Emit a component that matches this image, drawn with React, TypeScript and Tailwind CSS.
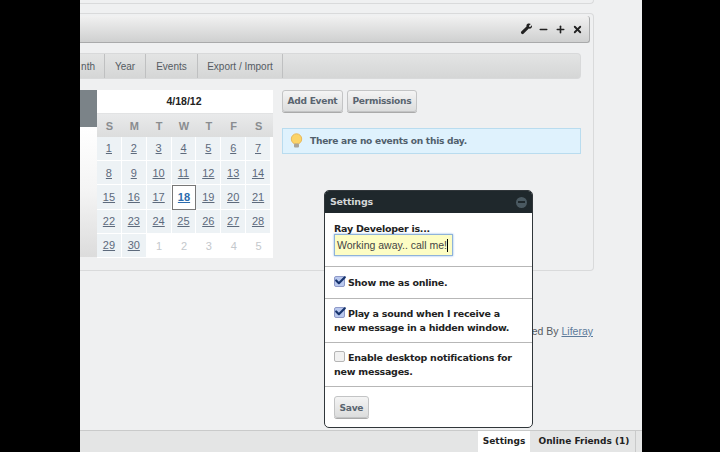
import { Check, Minus, Plus, X } from "lucide-react";

const sans = "font-['Liberation_Sans',Arial,sans-serif]";
const wide = "font-['DejaVu_Sans',Verdana,sans-serif]";

const tabs = [
  { label: "nth", width: "w-[25px]", align: "justify-end pr-[9px]" },
  { label: "Year", width: "w-[41px]", align: "justify-center" },
  { label: "Events", width: "w-[52px]", align: "justify-center" },
  { label: "Export / Import", width: "w-[85px]", align: "justify-center" },
];

const weekdays = ["S", "M", "T", "W", "T", "F", "S"];

const days = [
  1, 2, 3, 4, 5, 6, 7, 8, 9, 10, 11, 12, 13, 14, 15, 16, 17, 18, 19, 20, 21, 22,
  23, 24, 25, 26, 27, 28, 29, 30,
];

function Calendar() {
  return (
    <div className="w-[176px] bg-white">
      <div className={`${sans} flex h-[23px] items-center justify-center pr-[2px] text-[10.5px] font-bold text-[#222]`}>
        4/18/12
      </div>
      <div className="grid h-[24px] grid-cols-7 items-center border-t border-[#e2e3e4] bg-gradient-to-b from-[#e9eaeb] to-[#dcdddd] pt-[1px] pr-[2px]">
        {weekdays.map((d, i) => (
          <span key={i} className={`${sans} text-center text-[11px] font-bold text-[#8a8d90]`}>
            {d}
          </span>
        ))}
      </div>
      <div className="grid grid-cols-7 pr-[2px]">
        {days.map((d) => (
          <div
            key={d}
            className={
              d === 18
                ? "flex h-[24.2px] items-center justify-center border border-[#777] bg-white"
                : "flex h-[24.2px] items-center justify-center border-r border-b border-white bg-[#edf2f5]"
            }
          >
            <span
              className={`${sans} text-[11px] underline ${
                d === 18 ? "font-bold text-[#2c6bad]" : "text-[#5d6a7c]"
              }`}
            >
              {d}
            </span>
          </div>
        ))}
        {[1, 2, 3, 4, 5].map((d) => (
          <div key={d} className="flex h-[24.2px] items-center justify-center bg-white">
            <span className={`${sans} text-[11px] text-[#c4c8cc]`}>{d}</span>
          </div>
        ))}
      </div>
    </div>
  );
}

function WrenchIcon() {
  return (
    <svg width="12" height="12" viewBox="0 0 12 12" className="text-[#222]">
      <path
        fill="currentColor"
        d="M8.2.6c1-.3 2 0 2.6.4L9 2.8l.2 1 1 .2 1.7-1.700c.3.9.1 2-.6 2.600-.7.7-1.600.9-2.500.6L3.500 10.800c-.5.5-1.300.5-1.800 0l-.4-.4c-.5-.5-.5-1.300 0-1.800l5.200-5.100c-.2-.9 0-1.800.7-2.400z"
      />
    </svg>
  );
}

function Portlet() {
  return (
    <div className="mr-[48px] h-[258px] rounded-r-[4px] border-y border-r border-[#d9dadb]">
      <div className="mt-[2px] mr-[3px] flex h-[27px] items-center justify-end gap-[6px] rounded-r-[3px] border-r border-b border-[#a9aaab] bg-gradient-to-b from-[#f1f1f1] to-[#cfd0d0] pr-[6px]">
        <WrenchIcon />
        <Minus size={11} strokeWidth={3.5} className="text-[#222]" />
        <Plus size={11} strokeWidth={3.5} className="text-[#222]" />
        <X size={11} strokeWidth={4} className="text-[#222]" />
      </div>

      <div className="mt-[10px] mr-[12px] flex h-[26px] rounded-r-[4px] border border-l-0 border-[#d8d9da] bg-gradient-to-b from-[#e3e4e4] to-[#d5d6d6]">
        {tabs.map((tab) => (
          <div
            key={tab.label}
            className={`${sans} ${tab.width} ${tab.align} flex items-center border-r border-[#bfc0c1] text-[10px] text-[#555b62]`}
          >
            {tab.label}
          </div>
        ))}
      </div>

      <div className="mt-[11px] mr-[12px] flex">
        <div className="flex h-[167px] w-[17px] flex-col">
          <div className="h-[37px] bg-[#7b8388]" />
          <div className="flex-1 bg-gradient-to-b from-white via-[#f4f4f4] to-[#dcdcdc]" />
        </div>
        <Calendar />
        <div className="ml-[9px] flex-1">
          <div className="flex gap-[4px]">
            <Button label="Add Event" />
            <Button label="Permissions" />
          </div>
          <div className="mt-[16px] flex h-[26px] items-center gap-[6px] border border-[#b9dcef] bg-[#dff2fd] pl-[6px]">
            <Bulb />
            <span className={`${wide} pt-[1px] text-[9.1px] font-bold tracking-[-0.27px] text-[#51606c]`}>
              There are no events on this day.
            </span>
          </div>
        </div>
      </div>
    </div>
  );
}

function Button({ label }: { label: string }) {
  return (
    <button
      type="button"
      className={`${wide} h-[22px] rounded-[3px] border border-[#c3c4c5] bg-gradient-to-b from-[#f4f4f4] to-[#dcdddd] px-[4.5px] pt-[1px] text-[9.1px] font-bold tracking-[-0.27px] text-[#5a6570] shadow-[0_1px_0_#aaa]`}
    >
      {label}
    </button>
  );
}

function Bulb() {
  return (
    <svg width="15" height="16" viewBox="0 0 15 16">
      <circle cx="7.5" cy="6" r="5.2" fill="#fbd467" stroke="#e9b95a" />
      <rect x="5" y="10.5" width="5" height="4" rx="1" fill="#a9a59a" />
    </svg>
  );
}

function CheckBox({ checked }: { checked: boolean }) {
  return (
    <span
      className={`relative mr-[3px] inline-block h-[11px] w-[11px] rounded-[2px] border align-[-1px] ${
        checked ? "border-[#8f9ac8] bg-[#b9c8ee]" : "border-[#b5b5b5] bg-[#f1f1f1]"
      }`}
    >
      {checked && (
        <Check size={13} strokeWidth={4} className="absolute -top-[3px] -left-[1px] text-[#17346e]" />
      )}
    </span>
  );
}

function SettingsPopup() {
  return (
    <div
      className={`${wide} absolute top-[190px] left-[244px] z-10 w-[209px] overflow-hidden rounded-[5px] border border-[#30363a] bg-white text-[9.5px] leading-[14px] font-bold tracking-[-0.25px] whitespace-nowrap text-[#222]`}
    >
      <div className="flex h-[22px] items-center justify-between bg-[#1f282c] px-[5px] text-[#d3d6d7]">
        Settings
        <span className="flex h-[11px] w-[11px] items-center justify-center rounded-full bg-[#4a5961]">
          <span className="h-[1.5px] w-[7px] bg-[#1f282c]" />
        </span>
      </div>
      <div className="h-[54px] border-b border-[#b7b7b7] pt-[10px] pl-[9px]">
        <div className="h-[11px] leading-[12px]">Ray Developer is...</div>
        <div
          className={`${sans} flex h-[22px] w-[119px] items-center border border-[#8fb3d9] bg-[#fdfdc4] pl-[2px] text-[10.5px] font-normal tracking-normal text-[#444] shadow-[0_0_2px_#8ab4e8]`}
        >
          Working away.. call me!
          <span className="h-[13px] w-px bg-black" />
        </div>
      </div>
      <div className="h-[32px] border-b border-[#b7b7b7] pt-[9px] pl-[9px]">
        <CheckBox checked />
        Show me as online.
      </div>
      <div className="h-[44px] border-b border-[#b7b7b7] pt-[8px] pl-[9px]">
        <CheckBox checked />
        Play a sound when I receive a
        <br />
        new message in a hidden window.
      </div>
      <div className="h-[44px] border-b border-[#b7b7b7] pt-[8px] pl-[9px]">
        <CheckBox checked={false} />
        Enable desktop notifications for
        <br />
        new messages.
      </div>
      <div className="h-[40px] pt-[9px] pl-[9px]">
        <Button label="Save" />
      </div>
    </div>
  );
}

export default function App() {
  return (
    <div className="flex h-[452px] w-[720px] overflow-hidden bg-black">
      <div className="w-[80px]" />
      <div className="relative flex w-[562px] flex-col bg-[#eff0f1]">
        <div className="mr-[48px] h-[4px] rounded-br-[4px] border-r border-b border-[#d9dadb]" />
        <div className="h-[9px]" />
        <Portlet />
        <div className="mt-[46px] mr-[49px] text-right">
          <span className={`${sans} text-[10.5px] text-[#555b62]`}>
            Powered By <span className="text-[#5d7a9a] underline">Liferay</span>
          </span>
        </div>
        <div className="mt-auto flex h-[22px] justify-end border-t border-[#c9caca] bg-[#e4e5e5] pr-[6px]">
          <div className={`${wide} flex w-[52px] items-center justify-center bg-white text-[9px] font-bold text-[#222]`}>
            Settings
          </div>
          <div className={`${wide} flex w-[106px] items-center justify-center border-r border-[#c9caca] pl-[3px] text-[9px] font-bold text-[#222]`}>
            Online Friends (1)
          </div>
        </div>
        <SettingsPopup />
      </div>
      <div className="flex-1" />
    </div>
  );
}
